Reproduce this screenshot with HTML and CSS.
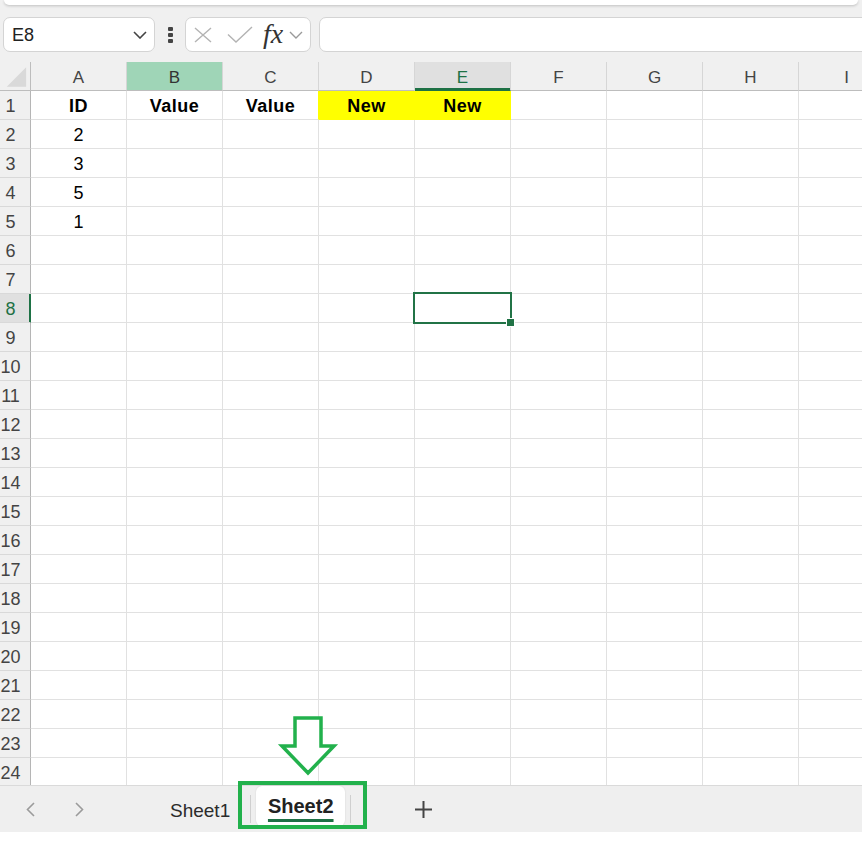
FILE: index.html
```html
<!DOCTYPE html>
<html lang="en">
<head>
    <meta charset="UTF-8">
    <meta name="viewport" content="width=device-width, initial-scale=1.0">
    <title>Book1 - Sheet2</title>
    <link rel="stylesheet" href="styles.css">
</head>
<body>
    <div class="toolbar">
        <div class="ribbon-edge"></div>

        <div class="formula-bar">
            <div class="name-box">
                <span>E8</span>
                <svg width="14" height="8" viewBox="0 0 14 8"><polyline points="1,1 7,7 13,1" fill="none" stroke="#444" stroke-width="1.6"/></svg>
            </div>
            <div class="bar-grip"><i></i><i></i><i></i></div>
            <div class="fx-box">
                <svg class="fx-cancel" width="20" height="16" viewBox="0 0 20 16"><path d="M2 1 L18 15 M18 1 L2 15" stroke="#b3b3b3" stroke-width="1.4" fill="none"/></svg>
                <svg class="fx-enter" width="26" height="17" viewBox="0 0 26 17"><polyline points="1,8.5 9,16 25,1" fill="none" stroke="#b3b3b3" stroke-width="1.4"/></svg>
                <span class="fx">fx</span>
                <svg width="14" height="8" viewBox="0 0 14 8"><polyline points="1,1 7,7 13,1" fill="none" stroke="#9a9a9a" stroke-width="1.4"/></svg>
            </div>
            <div class="formula-input"></div>
        </div>
    </div>

    <div class="sheet" id="sheet">
        <div class="row head-row" id="headRow">
            <div class="corner">
                <svg width="31" height="28" viewBox="0 0 31 28"><polygon points="27,5 27,25 7,25" fill="#d9d9d9"/></svg>
            </div>
        </div>
    </div>

    <div class="tab-bar">
        <div class="tab-nav">
            <svg width="9" height="15" viewBox="0 0 9 15"><polyline points="8,1 1.5,7.5 8,14" fill="none" stroke="#9b9b9b" stroke-width="1.6"/></svg>
            <svg width="9" height="15" viewBox="0 0 9 15"><polyline points="1,1 7.5,7.5 1,14" fill="none" stroke="#9b9b9b" stroke-width="1.6"/></svg>
        </div>
        <div class="sheet-tab">Sheet1</div>
        <div class="tab-sep"></div>
        <div class="sheet-tab active"><span>Sheet2</span></div>
        <div class="tab-sep"></div>
        <svg class="add-sheet" width="17" height="17" viewBox="0 0 17 17"><path d="M8.5 0 V17 M0 8.5 H17" stroke="#444" stroke-width="2"/></svg>
    </div>

    <!-- arrow and box drawn on top of the tab strip -->
    <svg class="callout" width="862" height="850" viewBox="0 0 862 850">
        <polygon points="295,718 321,718 321,746 334,746 308,773 282,746 295,746" fill="#fff" stroke="#22b14c" stroke-width="3.5" stroke-linejoin="miter"/>
        <rect x="240" y="783" width="125" height="44" fill="none" stroke="#22b14c" stroke-width="4"/>
    </svg>

    <script>
        const cols = ['A', 'B', 'C', 'D', 'E', 'F', 'G', 'H', 'I'];
        const values = {
            1: ['ID', 'Value', 'Value', 'New', 'New'],
            2: ['2'],
            3: ['3'],
            4: ['5'],
            5: ['1']
        };
        const activeCol = 'E';
        const activeRow = 8;

        // column letters
        const headRow = document.getElementById('headRow');
        cols.forEach(c => {
            const h = document.createElement('div');
            h.className = 'col-head';
            if (c === 'B') h.classList.add('hover');
            if (c === activeCol) h.classList.add('current');
            h.textContent = c;
            headRow.appendChild(h);
        });

        // rows 1..24
        const sheet = document.getElementById('sheet');
        for (let r = 1; r <= 24; r++) {
            const row = document.createElement('div');
            row.className = 'row';

            const rh = document.createElement('div');
            rh.className = 'row-head';
            if (r === activeRow) rh.classList.add('current');
            rh.textContent = r;
            row.appendChild(rh);

            cols.forEach((c, i) => {
                const cell = document.createElement('div');
                cell.className = 'cell';
                const v = values[r] && values[r][i];
                if (v) cell.textContent = v;
                if (r === 1) {
                    cell.classList.add('bold');
                    if (c === 'C') cell.classList.add('yellow-edge');
                    if (c === 'D' || c === 'E') cell.classList.add('yellow');
                }
                if (r === activeRow && c === activeCol) cell.classList.add('active');
                row.appendChild(cell);
            });
            sheet.appendChild(row);
        }
    </script>
</body>
</html>
```

FILE: styles.css
```css
body {
    margin: 0;
    width: 862px;
    height: 850px;
    overflow: hidden;
    position: relative;
    background: #fff;
    font-family: "Liberation Sans", Arial, sans-serif;
    color: #000;
}

/* top area: ribbon edge + formula bar */
.toolbar {
    background: #f0f0f0;
}
.ribbon-edge {
    height: 5px;
    margin: 0 4px;
    background: #fff;
    border-radius: 0 0 8px 8px;
    box-shadow: 0 1px 3px rgba(0, 0, 0, 0.2);
}
.formula-bar {
    display: flex;
    align-items: center;
    padding: 12px 0 10px 3px;
}
.name-box {
    box-sizing: border-box;
    width: 152px;
    height: 35px;
    display: flex;
    align-items: center;
    justify-content: space-between;
    padding: 1px 7px 0 8px;
    background: #fff;
    border: 1px solid #d4d4d4;
    border-radius: 7px;
    font-size: 18px;
    color: #222;
}
.bar-grip {
    display: flex;
    flex-direction: column;
    gap: 2px;
    margin: 0 12px 0 13px;
}
.bar-grip i {
    display: block;
    width: 5px;
    height: 4px;
    background: #444;
    border-radius: 1px;
}
.fx-box {
    box-sizing: border-box;
    width: 126px;
    height: 35px;
    display: flex;
    align-items: center;
    padding-left: 7px;
    background: #fff;
    border: 1px solid #d4d4d4;
    border-radius: 7px;
}
.fx-cancel {
    margin-right: 14px;
}
.fx-enter {
    margin-right: 10px;
}
.fx {
    font-family: "Liberation Serif", "Times New Roman", serif;
    font-style: italic;
    font-size: 28px;
    color: #333;
    margin-right: 6px;
    line-height: 1;
    position: relative;
    top: -1px;
}
.formula-input {
    box-sizing: border-box;
    flex: 1;
    height: 35px;
    margin: 0 -20px 0 8px;
    background: #fff;
    border: 1px solid #d4d4d4;
    border-radius: 7px;
}

/* grid */
.sheet {
    height: 723px;
    overflow: hidden;
}
.row {
    display: grid;
    grid-template-columns: 31px repeat(9, 96px);
    height: 29px;
}
.row > div {
    box-sizing: border-box;
    display: flex;
    align-items: center;
    justify-content: center;
    padding-top: 3px;
}
.row > .corner {
    padding-top: 0;
}
.corner,
.col-head {
    background: #f0f0f0;
    border-bottom: 1px solid #bdbdbd;
}
.corner {
    border-right: 1px solid #bdbdbd;
}
.col-head {
    border-right: 1px solid #d6d6d6;
    font-size: 17px;
    color: #444;
}
.col-head.hover {
    background: #9fd5b7;
    color: #333;
}
.col-head.current {
    background: #e0e0e0;
    color: #1e7145;
    border-bottom-color: #1e7145;
    box-shadow: inset 0 -2px 0 #1e7145;
}
.row-head {
    background: #f0f0f0;
    border-right: 1px solid #b5b5b5;
    border-bottom: 1px solid #d9d9d9;
    padding-right: 9px;
    font-size: 18px;
    color: #444;
}
.row-head.current {
    background: #e0e0e0;
    color: #1e7145;
    border-right-color: #1e7145;
    box-shadow: inset -1px 0 0 #1e7145;
}
.cell {
    border-right: 1px solid #e1e1e1;
    border-bottom: 1px solid #e1e1e1;
    font-size: 18px;
}
.cell.bold {
    font-weight: bold;
    letter-spacing: 0.5px;
}
.cell.yellow {
    background: #ffff00;
    border-color: #ffff00;
}
.cell.yellow-edge {
    border-right-color: #ffff00;
}
.cell.active {
    position: relative;
}
.cell.active::before {
    content: "";
    position: absolute;
    left: -2px;
    top: -2px;
    width: 99px;
    height: 32px;
    box-sizing: border-box;
    border: 2px solid #217346;
}
.cell.active::after {
    content: "";
    position: absolute;
    left: 92px;
    top: 25px;
    width: 7px;
    height: 7px;
    background: #217346;
    box-shadow: 0 0 0 1px #fff;
}

/* sheet tabs */
.tab-bar {
    box-sizing: border-box;
    height: 47px;
    display: flex;
    align-items: center;
    background: #efefef;
    border-top: 1px solid #dadada;
}
.tab-nav {
    display: flex;
    gap: 40px;
    margin-left: 26px;
}
.sheet-tab {
    margin-left: 74px;
    padding: 3px 12px 0;
    font-size: 19px;
    color: #2b2b2b;
}
.tab-sep {
    width: 1px;
    height: 28px;
    margin-left: 8px;
    background: #cfcfcf;
}
.sheet-tab.active {
    box-sizing: border-box;
    align-self: flex-start;
    width: 89px;
    height: 40px;
    margin: 0 5px 0 5px;
    padding: 0;
    display: flex;
    align-items: center;
    justify-content: center;
    background: #fff;
    border-radius: 6px;
    box-shadow: 0 0 2px rgba(0, 0, 0, 0.12);
    font-size: 20px;
    font-weight: bold;
    color: #222;
}
.sheet-tab.active span {
    text-decoration: underline;
    text-decoration-color: #1e7145;
    text-decoration-thickness: 3px;
    text-underline-offset: 6px;
}
.sheet-tab.active + .tab-sep {
    margin-left: 0;
}
.add-sheet {
    margin-left: 64px;
}

.callout {
    position: absolute;
    left: 0;
    top: 0;
    pointer-events: none;
}
```
